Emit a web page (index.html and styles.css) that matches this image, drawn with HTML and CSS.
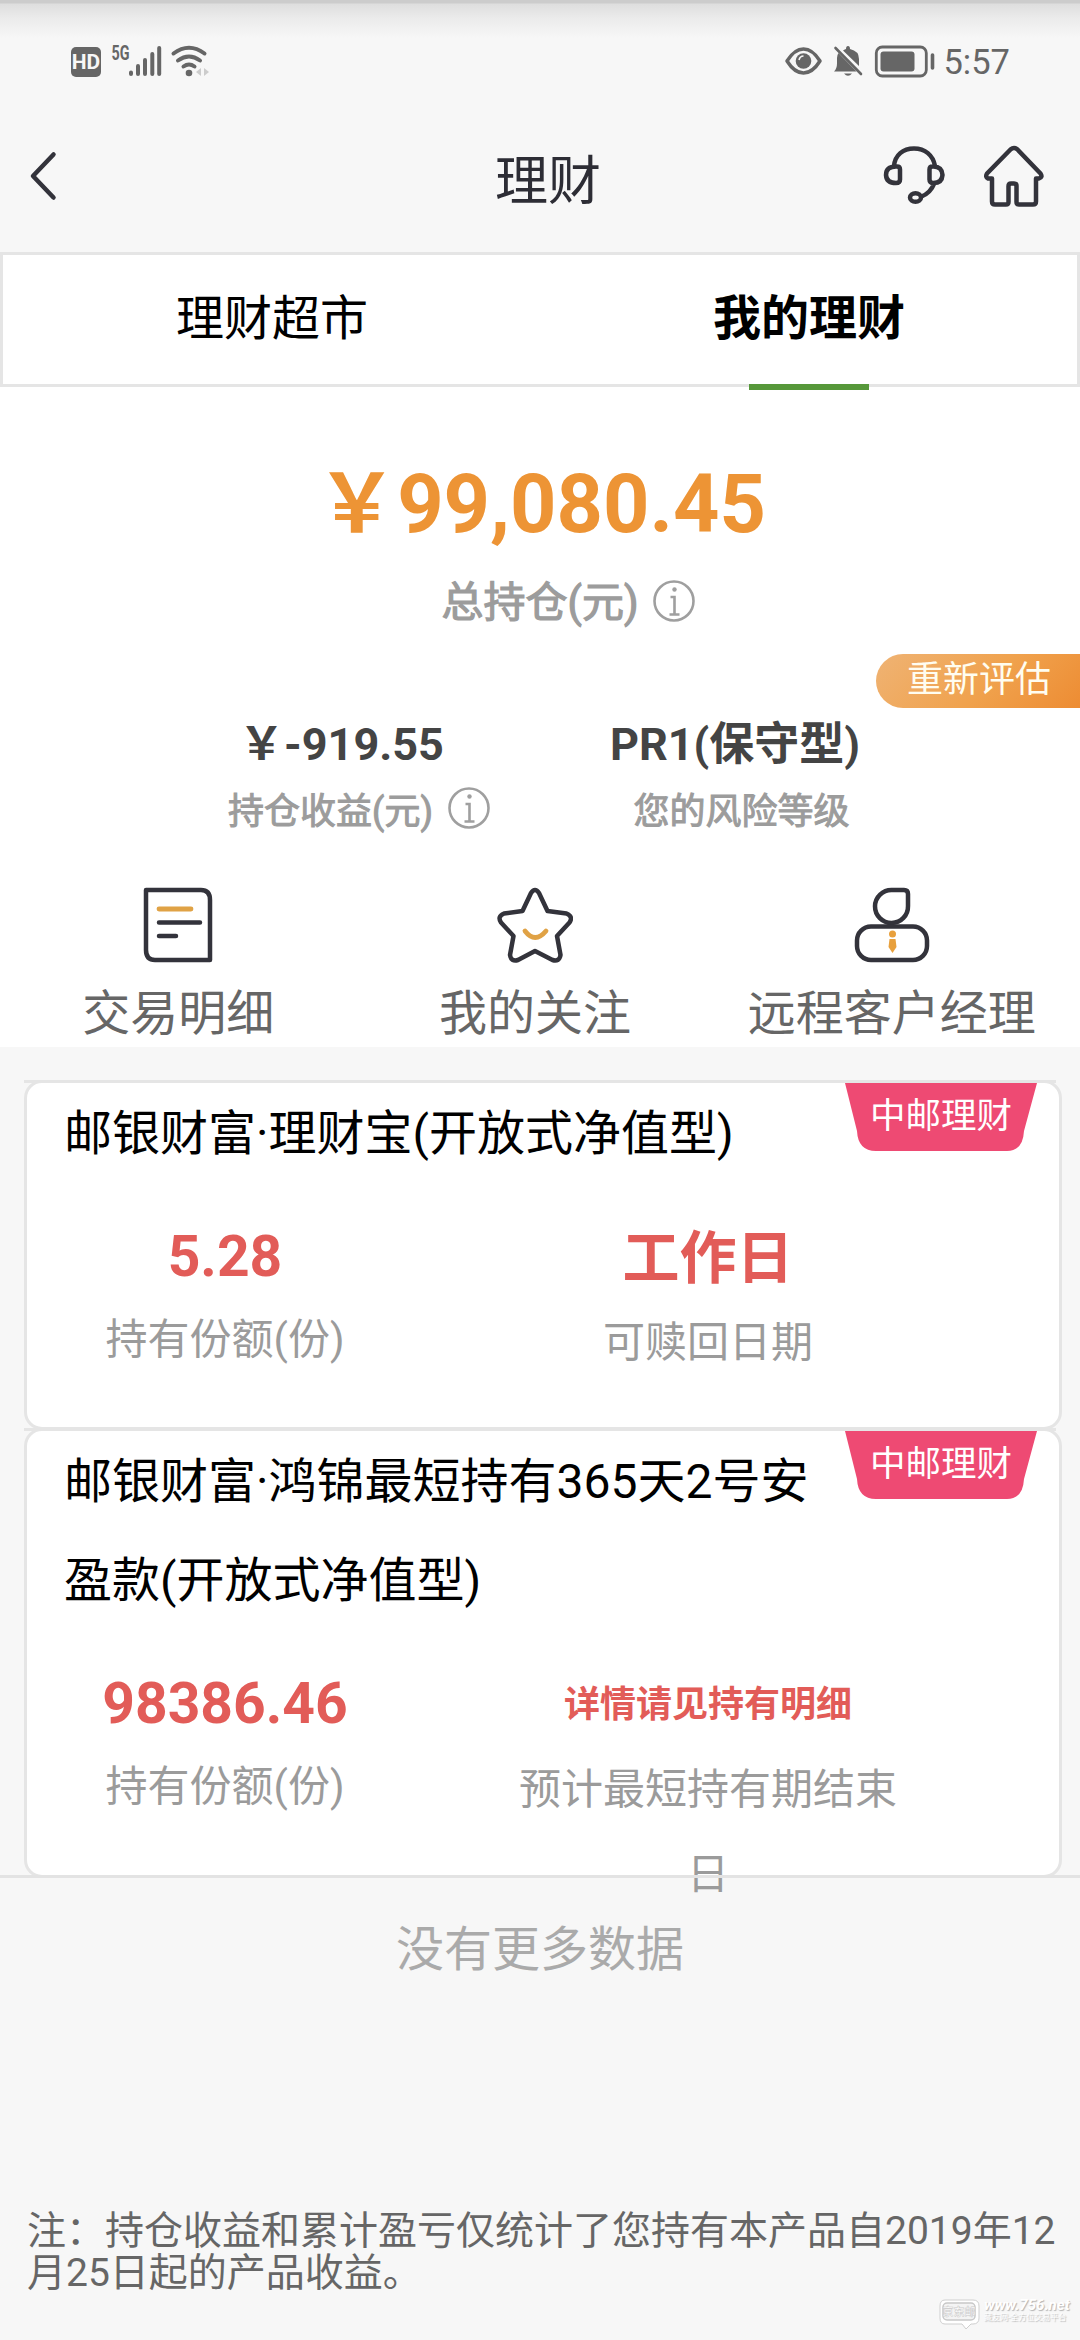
FILE: index.html
```html
<!DOCTYPE html>
<html lang="zh-CN">
<head>
<meta charset="utf-8">
<title>理财</title>
<link rel="stylesheet" href="styles.css">
</head>
<body>
<div class="screen">
  <div class="status">
    <div class="status-left">
      <svg width="140" height="44" viewBox="70 34 140 44">
        <rect x="71" y="47" width="30" height="30" rx="5" fill="#666"/>
        <text x="86" y="69" class="hd">HD</text>
        <text x="111.500" y="59.500" class="net" textLength="18" lengthAdjust="spacingAndGlyphs">5G</text>
        <g stroke="#666" stroke-width="4" stroke-linecap="round">
          <path d="M131 72.500v1.500M138 66v8M145 60v14M152.300 54v20M159.200 48v26"/>
        </g>
        <g fill="none" stroke="#666" stroke-width="4" stroke-linecap="round">
          <path d="M173.500 53.500q15.500-11.500 31 0M178 60.500q11-8 22 0M183.500 66.500q5.500-4 11 0"/>
        </g>
        <circle cx="189" cy="73" r="3.300" fill="#666"/>
        <path d="M201 68v8l-5-4zM204 68v8l5-4z" fill="#ccc"/>
      </svg>
    </div>
    <div class="status-right">
      <svg width="154" height="44" viewBox="781 34 154 44">
        <path d="M786 61q7.500-12 16.500-12t16.500 12q-7.500 12-16.500 12T786 61z" fill="none" stroke="#666" stroke-width="3.500" stroke-linejoin="round"/>
        <circle cx="802.500" cy="61" r="7.800" fill="#666"/>
        <path d="M798 60q1-4 4.500-4" fill="none" stroke="#f7f7f7" stroke-width="1.600"/>
        <path d="M833 71.500q3-3 3-8V58q0-3 1.500-5l18 18.500zM842 50.500q2-1.500 3-1.500 0-3 2-3t2 3q9 2 9 10v7zM843 73.500h8q-4 4.500-8 0z" fill="#666"/>
        <path d="M834.500 48l25.500 26" stroke="#666" stroke-width="2.600" stroke-linecap="round"/>
        <rect x="875.300" y="47" width="50" height="29" rx="6" fill="none" stroke="#666" stroke-width="2.800"/>
        <rect x="879.500" y="51.500" width="34" height="20" rx="3" fill="#666"/>
        <path d="M931.500 55v13" stroke="#666" stroke-width="3.600" stroke-linecap="round"/>
      </svg>
      <span class="clock">5:57</span>
    </div>
  </div>

  <header class="nav">
    <svg class="back" width="28" height="52" viewBox="0 0 28 52"><path d="M24.500 4.500L4 26l20.500 21.500" class="ink"/></svg>
    <h1 class="nav-title">理财</h1>
    <div class="nav-actions">
      <svg width="62" height="62" viewBox="882 146 62 62">
        <g class="ink">
          <path d="M893 168c1-11 9-17.500 20-17.500S932 157 934 168M895 168.500h1q3 0 3 3v10q0 3.500-4 3.500-9.500 0-10-8 0-8.500 10-8.500zM932.500 168.500h-1q-3 0-3 3v10q0 3.500 4 3.500 8.500 0 9-8-.5-8.500-9-8.500zM933.500 185q-4 10-13 13.500"/>
          <ellipse cx="914.500" cy="199.500" rx="5.500" ry="4.300"/>
        </g>
      </svg>
      <svg width="62" height="64" viewBox="982 144 62 64">
        <path class="ink" d="M1009.500 149.500q3.500-3 7 0l23 24q2.500 3.500-1.500 5h-3v23q0 3-3 3h-14q-2.500 0-2.500-2.500v-16q0-2.500-2.500-2.500h-3q-2.500 0-2.500 2.500v16q0 2.500-2.500 2.500h-11q-3 0-3-3v-23h-4q-3-1.500-1-5z"/>
      </svg>
    </div>
  </header>

  <nav class="tabs">
    <div class="tab"><span>理财超市</span></div>
    <div class="tab active"><span>我的理财</span></div>
  </nav>

  <section class="summary">
    <div class="total">￥99,080.45</div>
    <div class="total-label"><span>总持仓(元)</span>
      <svg class="info" width="42" height="42" viewBox="0 0 42 42"><circle cx="21" cy="21" r="19.500"/><circle class="dot" cx="21.500" cy="9.500" r="2.200"/><path d="M17.500 17h4v16.500M16.500 34.500h10"/></svg>
    </div>
    <div class="reassess">重新评估</div>
    <div class="metrics">
      <div class="metric profit">
        <div class="metric-value">￥-919.55</div>
        <div class="metric-label"><span>持仓收益(元)</span>
          <svg class="info" width="42" height="42" viewBox="0 0 42 42"><circle cx="21" cy="21" r="19.500"/><circle class="dot" cx="21.500" cy="9.500" r="2.200"/><path d="M17.500 17h4v16.500M16.500 34.500h10"/></svg>
        </div>
      </div>
      <div class="metric risk">
        <div class="metric-value">PR1(保守型)</div>
        <div class="metric-label"><span>您的风险等级</span></div>
      </div>
    </div>
    <div class="shortcuts">
      <div class="shortcut">
        <svg width="76" height="76" viewBox="0 0 76 76">
          <path class="ink" d="M6 3h55q9 0 9 10v60H15q-9 0-9-10z"/>
          <path class="gold" d="M19 22h32"/><path class="ink" d="M19 35.500h41M19 49h17"/>
        </svg>
        <span>交易明细</span>
      </div>
      <div class="shortcut">
        <svg width="76" height="76" viewBox="0 0 76 76">
          <path class="ink" d="M34 6q4-6 8 0l8.500 18 19 2.500q7 3 3 9L60 49l3.500 19q-1 7-8 5L38 64l-17 9q-7 2-8-5l3.500-19L4 35.500q-4-6 3-9l18.500-2.500z"/>
          <path class="gold" d="M28 44q10 13 21 0"/>
        </svg>
        <span>我的关注</span>
      </div>
      <div class="shortcut">
        <svg width="76" height="76" viewBox="0 0 76 76">
          <path class="ink" d="M38 3h12q4 0 4 4v12a16.500 16.500 0 1 1-16-16z"/>
          <rect class="ink" x="3" y="39.500" width="70" height="33.500" rx="14"/>
          <circle cx="38.500" cy="47" r="3.500" fill="#e8a03c"/><path d="M35.500 52h6l1 8-4 6-4-6z" fill="#e8a03c"/>
        </svg>
        <span>远程客户经理</span>
      </div>
    </div>
  </section>

  <main class="holdings">
    <article class="card">
      <div class="ribbon"><svg width="192" height="68" viewBox="0 0 192 68"><path d="M0 0h192l-13 48q-1 20-17 20H31q-18 0-19-20z" fill="#ee4a73"/></svg><span>中邮理财</span></div>
      <h2 class="card-title">邮银财富·理财宝(开放式净值型)</h2>
      <div class="figures">
        <div class="figure share"><b>5.28</b><span>持有份额(份)</span></div>
        <div class="figure term"><b>工作日</b><span>可赎回日期</span></div>
      </div>
    </article>
    <article class="card tall">
      <div class="ribbon"><svg width="192" height="68" viewBox="0 0 192 68"><path d="M0 0h192l-13 48q-1 20-17 20H31q-18 0-19-20z" fill="#ee4a73"/></svg><span>中邮理财</span></div>
      <h2 class="card-title">邮银财富·鸿锦最短持有365天2号安盈款(开放式净值型)</h2>
      <div class="figures">
        <div class="figure share"><b>98386.46</b><span>持有份额(份)</span></div>
        <div class="figure term"><b class="small">详情请见持有明细</b><span>预计最短持有期结束日</span></div>
      </div>
    </article>
  </main>
  <div class="list-end">没有更多数据</div>

  <footer class="note">注：持仓收益和累计盈亏仅统计了您持有本产品自2019年12月25日起的产品收益。</footer>

  <div class="watermark">
    <svg width="44" height="34" viewBox="0 0 44 34">
      <path d="M7 3h28q6 0 6 6v12q0 6-6 6h-2l-5 5-4-5H7q-5 0-5-6V9q0-6 5-6z" fill="#fff" stroke="#cfcfcf" stroke-width="1"/>
      <rect x="5" y="6" width="32" height="17" rx="4" fill="#f4f4f4" stroke="#c8c8c8" stroke-width="1.500"/>
      <text x="21" y="19" class="mark-logo">京东邮</text>
    </svg>
    <div class="mark-text"><span class="mark-url">www.756.net</span><span class="mark-sub">藏友网-全方位交易平台</span></div>
  </div>
</div>
</body>
</html>
```

FILE: styles.css
```css
* { box-sizing: border-box; }
body {
  margin: 0;
  background: #f7f7f7;
  font-family: Roboto, "Noto Sans CJK SC", sans-serif;
}
.screen {
  position: relative;
  width: 1080px;
  height: 2340px;
  overflow: hidden;
  display: flex;
  flex-direction: column;
  background: linear-gradient(#ccc 0, #ccc 3px, #dedede 4px, #ebebeb 18px, #f7f7f7 38px);
}
svg { display: block; flex: none; }
.ink { fill: none; stroke: #33333b; stroke-width: 4.5; stroke-linecap: round; stroke-linejoin: round; }
.gold { fill: none; stroke: #e0a245; stroke-width: 4.8; stroke-linecap: round; }

.status {
  height: 100px;
  padding: 34px 70px 0;
  display: flex;
  justify-content: space-between;
}
.status-left, .status-right { display: flex; height: 46px; }
.hd { font: bold 21px Roboto, sans-serif; fill: #f7f7f7; text-anchor: middle; }
.net { font: bold 20px Roboto, sans-serif; fill: #666; }
.clock { margin: 10px 0 0 7px; font-size: 34.5px; line-height: 36px; color: #666; }

.nav {
  height: 152px;
  padding: 0 35px 0 29px;
  display: grid;
  grid-template-columns: 288px 1fr 274px;
  align-items: center;
}
.nav-title { margin: 11px 0 0 8px; text-align: center; font-size: 53px; font-weight: 400; line-height: 70px; color: #2d2d35; }
.nav-actions { display: flex; gap: 38px; justify-content: flex-end; }

.tabs {
  position: relative;
  height: 135px;
  border: 3px solid #e5e5e5;
  background: #fff;
  display: flex;
}
.tab { flex: 1; text-align: center; font-size: 48px; line-height: 128px; color: #000; }
.tab span { margin-left: 1px; }
.tab.active { font-weight: 700; }
.tab.active::after { content: ""; display: block; width: 120px; height: 6px; margin: 1px auto 0; background: #56983a; }

.summary { height: 660px; background: #fff; }
.total { padding: 71px 0 0 2px; text-align: center; font-size: 81px; line-height: 94px; font-weight: 700; color: #ed9435; }
.total-label { height: 44px; margin-top: 27px; display: flex; align-items: center; justify-content: center; gap: 14px; padding-left: 56px; font-size: 42px; color: #9c9c9c; -webkit-text-stroke: 1.2px #9c9c9c; }
.total-label span { margin-top: -5px; }
.info { fill: none; stroke: #9f9f9f; stroke-width: 2.6; }
.info .dot { fill: #9f9f9f; stroke: none; }
.reassess {
  width: 204px;
  height: 54px;
  margin: 31px 0 0 auto;
  padding-left: 31px;
  border-radius: 27px 0 0 27px;
  background: linear-gradient(135deg, #efb374, #f0a24d 55%, #ed8c33);
  color: #fffdf0;
  font-size: 36px;
  line-height: 53px;
}
.metrics { display: flex; height: 179px; padding-left: 179px; }
.metric { display: flex; flex-direction: column; align-items: center; padding-top: 10px; }
.profit { width: 360px; }
.profit .metric-value { margin-right: 35px; }
.risk { width: 392px; }
.risk .metric-label { padding-left: 13px; }
.metric-value { font-size: 45px; line-height: 54px; font-weight: 700; color: #444; }
.metric-label { display: flex; align-items: center; gap: 15px; height: 42px; margin-top: 15px; font-size: 36px; color: #9c9c9c; -webkit-text-stroke: 1px #9c9c9c; }
.shortcuts { display: flex; padding-right: 10px; }
.shortcut { flex: 1; display: flex; flex-direction: column; align-items: center; font-size: 48px; line-height: 70px; color: #666; }
.shortcut span { margin-top: 16px; }

.holdings { position: relative; margin-top: 33px; padding: 0 18px 0 24px; height: 798px; }
.holdings::after { content: ""; position: absolute; left: 0; right: 0; bottom: 0; height: 3px; background: #e3e3e3; }
.card { position: relative; height: 350px; margin-bottom: -2px; padding: 0 0 0 37px; border: 3px solid #e5e5e5; border-radius: 18px; background: #fff; }
.card::before { content: ""; position: absolute; top: -3px; left: -3px; width: 1032px; height: 3px; background: #e5e5e5; }
.tall { height: 450px; margin-bottom: 0; }
.card-title { margin: 1px 0 -1px; width: 760px; font-size: 48px; line-height: 99px; font-weight: 400; color: #000; }
.ribbon { position: absolute; top: 0; right: 22px; width: 192px; height: 68px; }
.ribbon span { position: absolute; inset: 0; text-align: center; color: #fff; font-size: 35.5px; line-height: 67px; }
.figures { display: flex; }
.figure { display: flex; flex-direction: column; align-items: center; color: #9b9b9b; font-size: 42px; text-align: center; }
.figure b { height: 115px; font-size: 57px; line-height: 150px; color: #e25c58; }
.figure .small { font-size: 36px; line-height: 153px; }
.figure span { line-height: 85px; }
.share { width: 322px; }
.term { width: 390px; margin-left: 127px; }
.term b { height: 118px; line-height: 153px; }

.list-end { margin-top: 37px; text-align: center; font-size: 48px; line-height: 70px; color: #aaa; }
.note { margin: 225px 20px 0 27px; font-size: 39px; line-height: 42px; color: #666; }

.watermark { position: absolute; left: 938px; top: 2297px; display: flex; gap: 2px; }
.mark-logo { font: bold 11px "Noto Sans CJK SC", sans-serif; fill: #fff; stroke: #c8c8c8; stroke-width: .5; text-anchor: middle; }
.mark-text { display: flex; flex-direction: column; color: #fff; text-shadow: 1px 1px 1px #b4b4b4; }
.mark-url { font: italic bold 15px/16px Roboto, sans-serif; }
.mark-sub { font-size: 8px; line-height: 10px; }
```
